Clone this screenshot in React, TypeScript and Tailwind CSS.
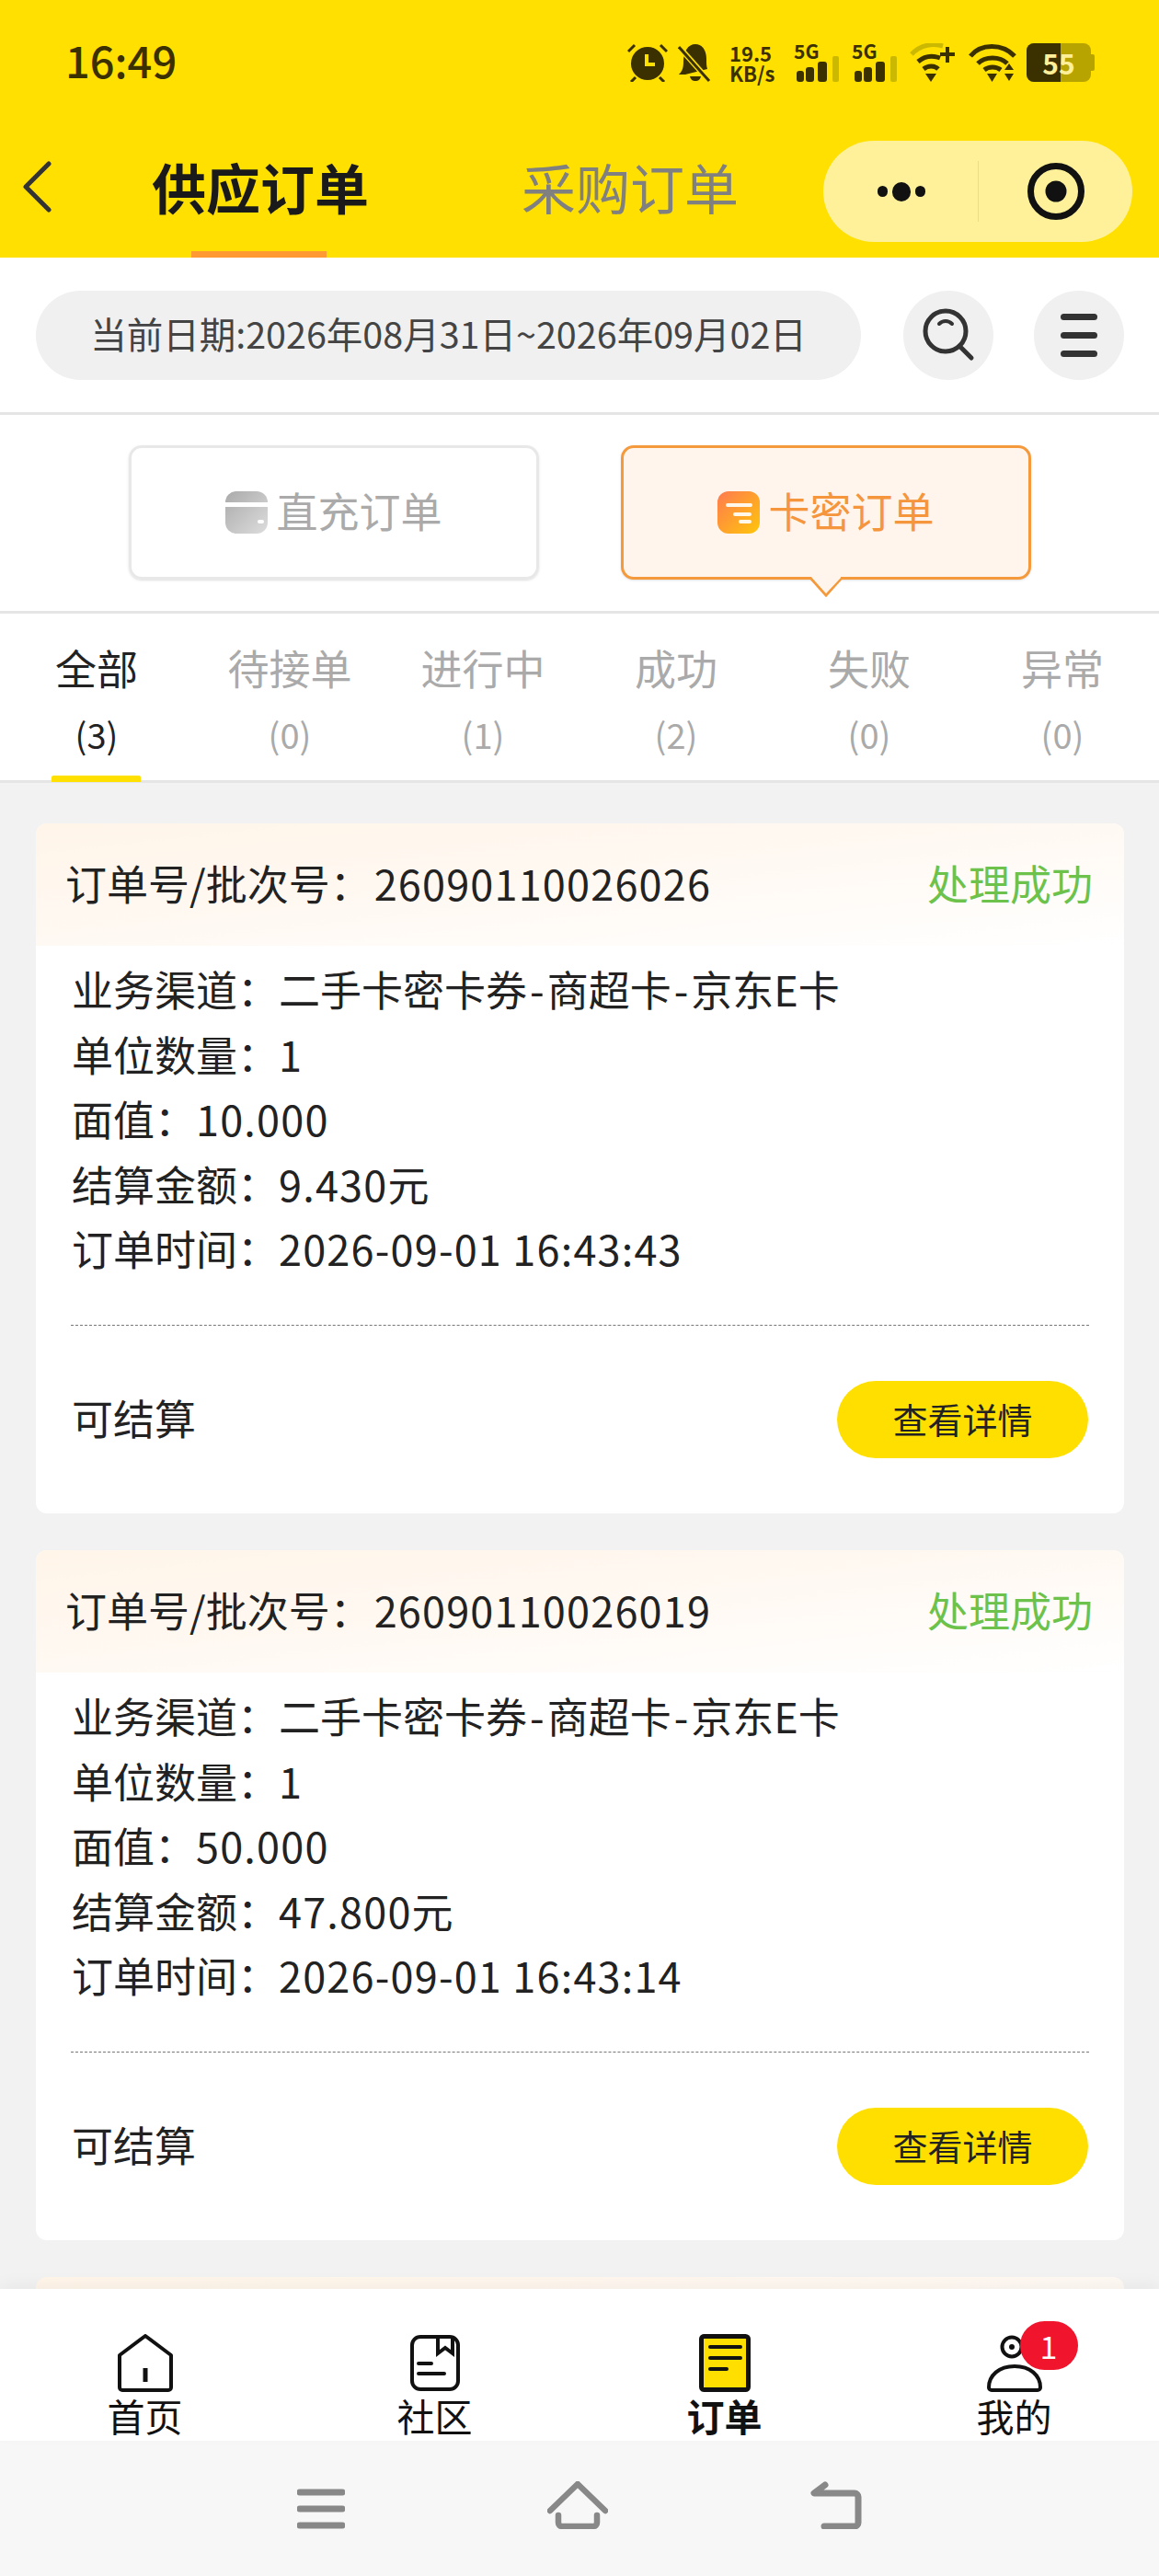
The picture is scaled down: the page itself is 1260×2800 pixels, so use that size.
const orders = [
  { no: '26090110026026', amount: '10.000', settle: '9.430元', time: '2026-09-01 16:43:43' },
  { no: '26090110026019', amount: '50.000', settle: '47.800元', time: '2026-09-01 16:43:14' },
];

const statusTabs = [
  { label: '全部', count: 3 },
  { label: '待接单', count: 0 },
  { label: '进行中', count: 1 },
  { label: '成功', count: 2 },
  { label: '失败', count: 0 },
  { label: '异常', count: 0 },
];

function Signal() {
  return (
    <div className="relative w-[50px] h-[42px]">
      <span className="absolute left-0 top-[-4px] text-[21px] leading-[24px] font-bold">5G</span>
      <svg width="50" height="42" viewBox="0 0 50 42">
        <rect x="3" y="30" width="8" height="12" rx="3" fill="#3a3000" />
        <rect x="13" y="26" width="9" height="16" rx="3" fill="#3a3000" />
        <rect x="26" y="20" width="10" height="22" rx="3" fill="#3a3000" />
        <rect x="42" y="14" width="7" height="28" rx="2" fill="#cbb800" />
      </svg>
    </div>
  );
}

function StatusIcons() {
  return (
    <div className="flex items-center text-[#3a3000]">
      <svg width="44" height="42" viewBox="0 0 44 42" className="mr-[11px]">
        <circle cx="22" cy="22" r="18" fill="#3a3000" />
        <path d="M21 12v11h9" fill="none" stroke="#ffe000" strokeWidth="4" />
        <path d="M1 9l7-7M43 9l-7-7M9 37l-5 5M35 37l5 5" stroke="#3a3000" strokeWidth="3" />
      </svg>
      <svg width="36" height="42" viewBox="0 0 36 42" className="mr-[20px]">
        <path d="M1 34c3-3 5-6 5-14C6 9 11 1 19 1s12 7 12 17c0 4 0 7 1 10L8 34z" fill="#3a3000" />
        <path d="M13 36h12c-1 4-3 5-6 5s-5-1-6-5z" fill="#3a3000" />
        <path d="M3 6l31 35" stroke="#ffe000" strokeWidth="6" />
        <path d="M1 4l33 37" stroke="#3a3000" strokeWidth="3" />
      </svg>
      <div className="w-[49px] mr-[21px] text-[22px] leading-[22px] font-semibold">
        19.5
        <br />
        KB/s
      </div>
      <div className="flex gap-[13px] mr-[13px]">
        <Signal />
        <Signal />
      </div>
      <svg width="50" height="42" viewBox="0 0 50 42" className="mr-[14px]">
        <path d="M2 12C12 1 26 0 36 3" fill="none" stroke="#cbb800" strokeWidth="5" />
        <path d="M9 20c7-6 16-7 24-4" fill="none" stroke="#3a3000" strokeWidth="5" />
        <path d="M15 28c5-4 12-4 16 0" fill="none" stroke="#3a3000" strokeWidth="5" />
        <path d="M17 33h12l-6 9z" fill="#3a3000" />
        <path d="M41 4v17M33 12h16" stroke="#3a3000" strokeWidth="4" />
      </svg>
      <svg width="52" height="42" viewBox="0 0 52 42" className="mr-[11px]">
        <path d="M2 14C13 0 37 0 50 14" fill="none" stroke="#3a3000" strokeWidth="5" />
        <path d="M10 22c8-8 24-8 32 0" fill="none" stroke="#3a3000" strokeWidth="5" />
        <path d="M17 29c5-4 13-4 18 0" fill="none" stroke="#3a3000" strokeWidth="5" />
        <path d="M20 33h11l-5.500 9z" fill="#3a3000" />
        <path d="M44 22l5 7H39zM39 33h10l-5 8z" fill="#3a3000" />
      </svg>
      <div className="flex items-center">
        <div className="relative w-[70px] h-[42px] rounded-[8px] overflow-hidden bg-[#b8a400] flex items-center justify-center">
          <div className="absolute left-0 top-0 bottom-0 w-[37px] bg-[#3a3000]" />
          <span className="relative text-[30px] leading-none font-bold text-[#ffef99]">55</span>
        </div>
        <div className="w-[4px] h-[18px] bg-[#b8a400] rounded-r-[2px]" />
      </div>
    </div>
  );
}

function TopBar() {
  return (
    <div className="bg-[#ffe000] h-[280px] shrink-0">
      <div className="flex items-center justify-between h-[135px] pl-[71px] pr-[70px]">
        <span className="text-[47px] leading-none font-medium text-[#3a3000] pb-[6px]">16:49</span>
        <StatusIcons />
      </div>
      <div className="relative flex items-center h-[145px] pl-[24px] pb-[10px]">
        <svg width="32" height="56" viewBox="0 0 32 56" className="mr-[109px]">
          <path d="M29 3L4 28l25 25" fill="none" stroke="#333" strokeWidth="5" strokeLinecap="round" strokeLinejoin="round" />
        </svg>
        <span className="text-[59px] leading-none font-bold text-[#1a1a1a]">供应订单</span>
        <span className="ml-[166px] text-[59px] leading-none text-[#808080]">采购订单</span>
        <div className="absolute left-[208px] bottom-0 w-[147px] h-[7px] bg-[#ff9a33]" />
        <div className="absolute right-[29px] top-[18px] w-[336px] h-[110px] rounded-full bg-[#fff19a] flex items-center">
          <div className="w-[168px] flex items-center justify-center gap-[5px] pl-[2px]">
            <div className="w-[11px] h-[12px] rounded-full bg-[#111]" />
            <div className="w-[20px] h-[21px] rounded-full bg-[#111]" />
            <div className="w-[11px] h-[12px] rounded-full bg-[#111]" />
          </div>
          <div className="w-px h-[66px] bg-[#ecdc88]" />
          <div className="flex-1 flex items-center justify-center">
            <svg width="64" height="64" viewBox="0 0 64 64">
              <circle cx="32" cy="32" r="27.500" fill="none" stroke="#111" strokeWidth="7" />
              <circle cx="32" cy="32" r="11.500" fill="#111" />
            </svg>
          </div>
        </div>
      </div>
    </div>
  );
}

function DateRow() {
  return (
    <div className="flex items-center bg-white h-[171px] pl-[39px] pr-[38px] border-b-[3px] border-[#e5e5e5] shrink-0">
      <div className="w-[897px] h-[97px] rounded-full bg-[#f0f0f0] flex items-center justify-center pb-[4px] text-[39.500px] text-[#444]">
        当前日期:2026年08月31日~2026年09月02日
      </div>
      <div className="ml-[46px] w-[98px] h-[97px] rounded-full bg-[#f0f0f0] flex items-center justify-center">
        <svg width="60" height="60" viewBox="0 0 60 60">
          <circle cx="27" cy="26" r="22" fill="none" stroke="#333" strokeWidth="5" />
          <path d="M42 42l13 13" stroke="#333" strokeWidth="5" strokeLinecap="round" />
          <path d="M20 18c4-4 10-4 14 0" fill="none" stroke="#333" strokeWidth="4" strokeLinecap="round" />
        </svg>
      </div>
      <div className="ml-[44px] w-[98px] h-[97px] rounded-full bg-[#f0f0f0] flex flex-col items-center justify-center gap-[13px]">
        <div className="w-[40px] h-[7px] rounded-full bg-[#333]" />
        <div className="w-[40px] h-[7px] rounded-full bg-[#333]" />
        <div className="w-[40px] h-[7px] rounded-full bg-[#333]" />
      </div>
    </div>
  );
}

function TypeToggle() {
  return (
    <div className="flex bg-white h-[216px] pt-[33px] pl-[140px] gap-[89px] border-b-[3px] border-[#e5e5e5] shrink-0">
      <div className="w-[446px] h-[146px] rounded-[14px] border-[3px] border-[#e8e8e8] shadow-sm flex items-center justify-center gap-[9px]">
        <svg width="46" height="46" viewBox="0 0 46 46">
          <defs>
            <linearGradient id="grayCard" x1="0" y1="0" x2="1" y2="1">
              <stop offset="0" stopColor="#aaaaaa" />
              <stop offset="1" stopColor="#dddddd" />
            </linearGradient>
          </defs>
          <rect width="46" height="46" rx="12" fill="url(#grayCard)" />
          <rect y="12" width="46" height="5" fill="#fff" />
          <rect x="35" y="31" width="7" height="4" rx="2" fill="#fff" />
        </svg>
        <span className="text-[45px] leading-none text-[#aaaaaa] pb-[6px]">直充订单</span>
      </div>
      <div className="relative w-[446px] h-[146px] rounded-[14px] border-[3px] border-[#f59a3c] bg-[#fff5ec] shadow-sm flex items-center justify-center gap-[9px]">
        <svg width="46" height="46" viewBox="0 0 46 46">
          <defs>
            <linearGradient id="orangeCard" x1="0" y1="0" x2="1" y2="1">
              <stop offset="0" stopColor="#ff7a50" />
              <stop offset="1" stopColor="#ffc60a" />
            </linearGradient>
          </defs>
          <rect width="46" height="46" rx="12" fill="url(#orangeCard)" />
          <path d="M11 15h25M19 25h16M25 33h10" stroke="#fff8ea" strokeWidth="4" strokeLinecap="round" />
        </svg>
        <span className="text-[45px] leading-none text-[#f5963c] pb-[6px]">卡密订单</span>
        <svg width="44" height="23" viewBox="0 0 44 23" className="absolute left-[198px] top-[140px]">
          <path d="M1 1h4l17 19L39 1h4" fill="#fff5ec" stroke="#f59a3c" strokeWidth="3" />
          <path d="M6 0h32v1L22 18z" fill="#fff5ec" />
        </svg>
      </div>
    </div>
  );
}

function StatusTabs() {
  return (
    <div className="grid grid-cols-6 bg-white h-[184px] border-b-[3px] border-[#e5e5e5] shrink-0">
      {statusTabs.map((tab, i) => (
        <div key={tab.label} className={`relative flex flex-col items-center pt-[29px] ${i === 0 ? 'text-[#222]' : 'text-[#aaaaaa]'}`}>
          <span className="text-[45px] leading-[60px]">{tab.label}</span>
          <span className="text-[38px] leading-[50px] mt-[17px]">({tab.count})</span>
          {i === 0 && <div className="absolute left-[56px] bottom-[-2px] w-[97px] h-[7px] rounded-t-[2px] bg-[#ffe000]" />}
        </div>
      ))}
    </div>
  );
}

function OrderCard({ order }: { order: (typeof orders)[number] }) {
  return (
    <div className="bg-white rounded-[12px] overflow-hidden h-[750px] shrink-0">
      <div className="h-[133px] flex items-center justify-between pl-[32px] pr-[34px] pb-[4px] bg-gradient-to-br from-[#fff5e9] via-[#fff9f3] to-white">
        <span className="text-[45px] text-[#222]">
          订单号/批次号：<span className="ml-[3px] tracking-[1.200px]">{order.no}</span>
        </span>
        <span className="text-[45px] text-[#6cc24a]">处理成功</span>
      </div>
      <div className="pt-[12px] pl-[39px] text-[45px] leading-[70.500px] text-[#222]">
        <div>
          业务渠道：二手卡密卡券<span className="mx-[3px]">-</span>商超卡<span className="mx-[3px]">-</span>京东E卡
        </div>
        <div>单位数量：1</div>
        <div>
          面值：<span className="tracking-[1.200px]">{order.amount}</span>
        </div>
        <div>
          结算金额：<span className="tracking-[1.200px]">{order.settle}</span>
        </div>
        <div>
          订单时间：<span className="tracking-[1.200px]">{order.time}</span>
        </div>
      </div>
      <div className="mt-[47px] mx-[38px] border-t border-dashed border-[#777]" />
      <div className="flex items-center justify-between mt-[60px] pl-[39px] pr-[39px]">
        <span className="text-[45px] text-[#222] pb-[4px]">可结算</span>
        <div className="w-[273px] h-[84px] rounded-full bg-[#ffdf00] flex items-center justify-center pb-[3px] text-[38px] text-[#222]">
          查看详情
        </div>
      </div>
    </div>
  );
}

function BottomNav() {
  return (
    <div className="relative grid grid-cols-4 bg-white h-[165px] pt-[49px] shrink-0 shadow-[0_-6px_16px_rgba(0,0,0,0.04)] text-[#111]">
      <div className="flex flex-col items-center">
        <svg width="60" height="63" viewBox="0 0 60 63">
          <path d="M30 2l28 21v35a3 3 0 0 1-3 3H5a3 3 0 0 1-3-3V23z" fill="none" stroke="#111" strokeWidth="4" strokeLinejoin="round" />
          <path d="M30 37v15" stroke="#111" strokeWidth="5" />
        </svg>
        <span className="text-[41px] leading-[46px] mt-[2px]">首页</span>
      </div>
      <div className="flex flex-col items-center">
        <svg width="54" height="63" viewBox="0 0 54 63">
          <rect x="2" y="3" width="50" height="57" rx="9" fill="none" stroke="#111" strokeWidth="4" />
          <path d="M30 3v18l8-6 8 6V3" fill="none" stroke="#111" strokeWidth="4" />
          <path d="M9 32h14M9 43h28" stroke="#111" strokeWidth="4" strokeLinecap="round" />
        </svg>
        <span className="text-[41px] leading-[46px] mt-[2px]">社区</span>
      </div>
      <div className="flex flex-col items-center">
        <svg width="56" height="63" viewBox="0 0 56 63">
          <rect x="2.500" y="2.500" width="51" height="58" rx="3" fill="#ffdf00" stroke="#111" strokeWidth="5" />
          <path d="M12 14h33M12 26h33M12 38h18" stroke="#111" strokeWidth="4" strokeLinecap="round" />
        </svg>
        <span className="text-[41px] leading-[46px] mt-[2px] font-bold">订单</span>
      </div>
      <div className="flex flex-col items-center">
        <div className="relative w-[60px] h-[63px]">
          <svg width="60" height="63" viewBox="0 0 60 63">
            <circle cx="27" cy="14" r="10.500" fill="none" stroke="#111" strokeWidth="4" />
            <circle cx="27" cy="14" r="3" fill="#111" />
            <path d="M5 61h50a3 3 0 0 0 3-3c0-13-11-23-28-23S2 45 2 58a3 3 0 0 0 3 3z" fill="none" stroke="#111" strokeWidth="4" />
          </svg>
          <div className="absolute left-[36px] top-[-14px] w-[63px] h-[53px] rounded-full bg-[#f0142d] flex items-center justify-center text-[34px] leading-none text-white">
            1
          </div>
        </div>
        <span className="text-[41px] leading-[46px] mt-[2px]">我的</span>
      </div>
    </div>
  );
}

function SystemBar() {
  return (
    <div className="flex justify-center gap-[220px] bg-[#f7f7f7] h-[147px] pt-[44px] shrink-0">
      <svg width="52" height="52" viewBox="0 0 52 52">
        <path d="M3 12h46M3 30h46M3 48h46" stroke="#888" strokeWidth="7" strokeLinecap="round" />
      </svg>
      <svg width="66" height="52" viewBox="0 0 66 52">
        <path d="M3 32L33 3l30 29" fill="none" stroke="#888" strokeWidth="6.500" strokeLinecap="round" strokeLinejoin="round" />
        <path d="M12 37v8a4 4 0 0 0 4 4h34a4 4 0 0 0 4-4v-8" fill="none" stroke="#888" strokeWidth="6.500" strokeLinecap="round" />
      </svg>
      <svg width="56" height="52" viewBox="0 0 56 52">
        <path d="M16 4L4 13h44a4 4 0 0 1 4 4v28a4 4 0 0 1-4 4H15" fill="none" stroke="#888" strokeWidth="7" strokeLinecap="round" strokeLinejoin="round" />
      </svg>
    </div>
  );
}

export default function App() {
  return (
    <div className="flex flex-col h-[2800px] overflow-hidden bg-[#f2f2f2] font-['Noto_Sans_CJK_SC',sans-serif]">
      <TopBar />
      <DateRow />
      <TypeToggle />
      <StatusTabs />
      <div className="flex-1 min-h-0 overflow-hidden flex flex-col gap-[40px] pt-[44px] pl-[39px] pr-[38px]">
        {orders.map((order) => (
          <OrderCard key={order.no} order={order} />
        ))}
        <div className="bg-white rounded-[12px] overflow-hidden shrink-0">
          <div className="h-[133px] bg-gradient-to-br from-[#fff5e9] via-[#fff9f3] to-white" />
        </div>
      </div>
      <BottomNav />
      <SystemBar />
    </div>
  );
}
